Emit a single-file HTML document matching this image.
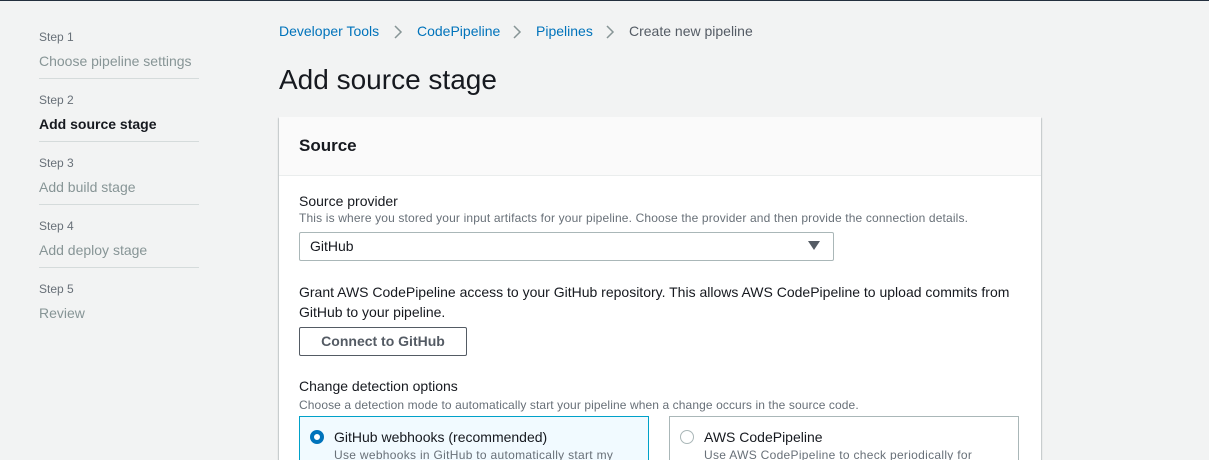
<!DOCTYPE html>
<html style="width:1209px;height:460px;overflow:hidden"><head><meta charset="utf-8"><style>
*{margin:0;padding:0;box-sizing:border-box}
body{width:1209px;height:460px;overflow:hidden;background:#f2f3f3;font-family:"Liberation Sans",sans-serif;position:relative;color:#16191f}
.a{position:absolute;white-space:nowrap}
.topbar{position:absolute;left:0;top:0;width:1209px;height:1px;background:#232f3e}
.sl{font-size:12px;color:#687078}
.st{font-size:14px;color:#879596}
.hr{position:absolute;left:39px;width:160px;height:1px;background:#d5dbdb}
.bc{font-size:14px;color:#0073bb}
.card{position:absolute;left:279px;top:117px;width:762px;height:343px;background:#fff;box-shadow:0 1px 1px rgba(0,28,36,.3),1px 1px 1px rgba(0,28,36,.15),-1px 1px 1px rgba(0,28,36,.15);overflow:hidden}
.hdr{position:absolute;left:0;top:0;width:762px;height:59px;background:#fafafa;border-bottom:1px solid #eaeded}
.lbl{font-size:14px;color:#16191f}
.desc{font-size:12px;color:#687078}
</style></head><body>
<div class="topbar"></div>
<div class="a sl" style="left:39px;top:30px">Step 1</div>
<div class="a st" style="left:39px;top:53px">Choose pipeline settings</div>
<div class="hr" style="top:78px"></div>
<div class="a sl" style="left:39px;top:93px">Step 2</div>
<div class="a st" style="left:39px;top:116px;color:#16191f;font-weight:bold">Add source stage</div>
<div class="hr" style="top:141px"></div>
<div class="a sl" style="left:39px;top:156px">Step 3</div>
<div class="a st" style="left:39px;top:179px">Add build stage</div>
<div class="hr" style="top:204px"></div>
<div class="a sl" style="left:39px;top:219px">Step 4</div>
<div class="a st" style="left:39px;top:242px">Add deploy stage</div>
<div class="hr" style="top:267px"></div>
<div class="a sl" style="left:39px;top:282px">Step 5</div>
<div class="a st" style="left:39px;top:305px">Review</div>

<div class="a bc" style="left:279px;top:23px">Developer Tools</div>
<svg class="a" style="left:393px;top:25px" width="10" height="14"><path d="M2 1l6 6-6 6" stroke="#879596" stroke-width="1.5" fill="none"/></svg>
<div class="a bc" style="left:417px;top:23px">CodePipeline</div>
<svg class="a" style="left:512px;top:25px" width="10" height="14"><path d="M2 1l6 6-6 6" stroke="#879596" stroke-width="1.5" fill="none"/></svg>
<div class="a bc" style="left:536px;top:23px">Pipelines</div>
<svg class="a" style="left:605px;top:25px" width="10" height="14"><path d="M2 1l6 6-6 6" stroke="#879596" stroke-width="1.5" fill="none"/></svg>
<div class="a" style="left:629px;top:23px;font-size:14px;color:#545b64">Create new pipeline</div>
<div class="a" style="left:279px;top:64px;font-size:28px;color:#16191f">Add source stage</div>

<div class="card">
 <div class="hdr"></div>
 <div class="a" style="left:20px;top:19px;font-size:17px;font-weight:bold">Source</div>
 <div class="a lbl" style="left:20px;top:76px">Source provider</div>
 <div class="a desc" style="left:20px;top:94px;letter-spacing:0.15px">This is where you stored your input artifacts for your pipeline. Choose the provider and then provide the connection details.</div>
 <div class="a" style="left:20px;top:115px;width:535px;height:29px;border:1px solid #aab7b8;border-radius:2px"></div>
 <div class="a lbl" style="left:31px;top:121px">GitHub</div>
 <svg class="a" style="left:529px;top:124px" width="12" height="10"><path d="M0 0h12L6 9z" fill="#545b64"/></svg>
 <div class="a lbl" style="left:20px;top:167px">Grant AWS CodePipeline access to your GitHub repository. This allows AWS CodePipeline to upload commits from</div>
 <div class="a lbl" style="left:20px;top:187px">GitHub to your pipeline.</div>
 <div class="a" style="left:20px;top:210px;width:168px;height:29px;border:1px solid #545b64;border-radius:2px;font-size:14px;font-weight:bold;color:#545b64;text-align:center;line-height:27px">Connect to GitHub</div>
 <div class="a lbl" style="left:20px;top:261px">Change detection options</div>
 <div class="a desc" style="left:20px;top:281px;letter-spacing:0.1px">Choose a detection mode to automatically start your pipeline when a change occurs in the source code.</div>
 <div class="a" style="left:20px;top:299px;width:350px;height:44px;border:1px solid #00a1c9;border-bottom:none;background:#f1faff"></div>
 <div class="a" style="left:31px;top:313px;width:14px;height:14px;border-radius:50%;border:4px solid #0073bb;background:#fff"></div>
 <div class="a lbl" style="left:55px;top:312px">GitHub webhooks (recommended)</div>
 <div class="a desc" style="left:55px;top:331px;letter-spacing:0.3px">Use webhooks in GitHub to automatically start my</div>
 <div class="a" style="left:390px;top:299px;width:350px;height:44px;border:1px solid #aab7b8;border-bottom:none"></div>
 <div class="a" style="left:401px;top:313px;width:14px;height:14px;border-radius:50%;border:1px solid #aab7b8;background:#fff"></div>
 <div class="a lbl" style="left:425px;top:312px">AWS CodePipeline</div>
 <div class="a desc" style="left:425px;top:331px;letter-spacing:0.3px">Use AWS CodePipeline to check periodically for</div>
</div>
</body></html>
